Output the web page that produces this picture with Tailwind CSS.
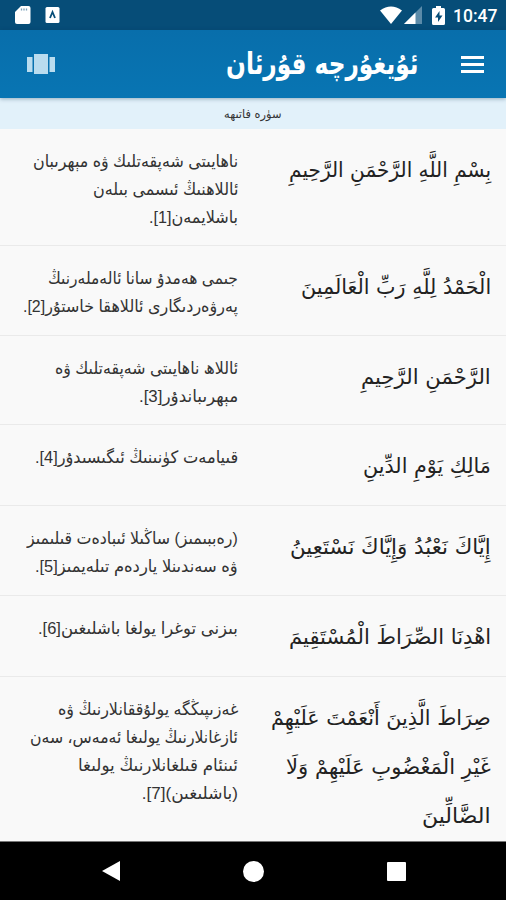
<!DOCTYPE html>
<html lang="ug">
<head>
<meta charset="utf-8">
<title>ئۇيغۇرچە قۇرئان</title>
<script src="https://cdn.jsdelivr.net/npm/@tailwindcss/browser@4"></script>
</head>
<body class="w-[506px] h-[900px] overflow-hidden bg-[#f9f9f9] font-['DejaVu_Sans',sans-serif] text-[#333]">
<div class="flex h-[900px] flex-col">
  <div class="flex h-[30px] shrink-0 items-center justify-between bg-[#064d78] pl-[14px] pr-[9px]">
    <div class="flex items-center gap-[13px]">
      <svg class="h-[20px] w-[18px]" viewBox="0 0 18 20"><path fill="#fff" d="M7 1h7.500q2 0 2 2v14q0 2-2 2H3q-2 0-2-2V7z"/><path stroke="#7b9fb8" stroke-width="1.300" d="M7.500 3.500v2M10 3.500v2M12.500 3.500v2"/></svg>
      <svg class="h-[16px] w-[15px]" viewBox="0 0 15 16"><rect width="14" height="16" x=".5" rx="1.500" fill="#fff"/><path d="M5 11 7.500 5l2.500 6" fill="none" stroke="#064d78" stroke-width="1.800"/></svg>
    </div>
    <div class="flex items-center" dir="ltr">
      <svg class="h-[18px] w-[22px]" viewBox="0 0 22 18"><path fill="#fff" d="M0 4.500Q11-3.500 22 4.500L11 18z"/></svg>
      <svg class="ml-[2px] h-[18px] w-[18px]" viewBox="0 0 18 18"><path fill="#5b8ba9" d="M18 0v18H0z"/><path fill="#fff" d="M11.500 6.500V18H0z"/></svg>
      <svg class="ml-[10px] h-[19px] w-[13px]" viewBox="0 0 13 19"><path fill="#fff" d="M4 0h5v2h2.500q1.500 0 1.500 1.500v14q0 1.500-1.500 1.500h-10Q0 19 0 17.500v-14Q0 2 1.500 2H4z"/><path fill="#064d78" d="M7.500 5 3 11.500h3V16l4.500-6.500h-3z"/></svg>
      <span class="ml-[8px] mt-[2px] w-[44px] whitespace-nowrap font-[Roboto,sans-serif] text-[17.500px] font-medium leading-5 text-white">10:47</span>
    </div>
  </div>
  <header class="z-10 flex h-[68px] shrink-0 items-center justify-between bg-linear-to-b from-[#086eab] to-[#0875b3] pl-[27px] pr-[22px] shadow-[0_1px_4px_rgba(0,50,80,0.35)]">
    <svg class="h-[22px] w-[28px]" viewBox="0 0 28 22"><path fill="#b9dcef" d="M0 4h5.500v15H0zM7 1h14v20H7zM22.500 4H28v15h-5.500z"/></svg>
    <div class="flex items-center gap-[43px]">
      <h1 class="w-[192px] text-[30px] font-bold leading-[40px] text-white" dir="rtl"><span class="block w-max origin-right whitespace-nowrap" data-w="192">ئۇيغۇرچە قۇرئان</span></h1>
      <svg class="mt-[1px] h-[17px] w-[23px]" viewBox="0 0 23 17"><path fill="#fff" d="M0 0h23v3H0zM0 7h23v3H0zM0 14h23v3H0z"/></svg>
    </div>
  </header>
  <div class="flex h-[31px] shrink-0 justify-center bg-[#e2f1fa] pt-[6px] text-[12px] leading-[20px]" dir="rtl"><div class="w-[57px]"><span class="block w-max origin-right whitespace-nowrap" data-w="57">سۈرە فاتىھە</span></div></div>
  <main id="verses" class="min-h-0 flex-1 overflow-hidden" dir="rtl"></main>
  <nav class="flex h-[59px] shrink-0 items-center justify-between border-t border-[#777] bg-black pl-[102px] pr-[100px]">
    <svg class="h-[20px] w-[18px]" viewBox="0 0 18 20"><path fill="#fff" d="M18 0v20L0 10z"/></svg>
    <div class="size-[21px] rounded-full bg-white"></div>
    <div class="size-[19px] rounded-[1px] bg-white"></div>
  </nav>
</div>
<script>
const verses = [
  [117, [['بِسْمِ اللَّهِ الرَّحْمَنِ الرَّحِيمِ',202]], [['ناھايىتى شەپقەتلىك ۋە مېھرىبان',205],['ئاللاھنىڭ ئىسمى بىلەن',145],['باشلايمەن[1].',89]]],
  [90, [['الْحَمْدُ لِلَّهِ رَبِّ الْعَالَمِينَ',190]], [['جىمى ھەمدۇ سانا ئالەملەرنىڭ',190],['پەرۋەردىگارى ئاللاھقا خاستۇر[2].',215]]],
  [89, [['الرَّحْمَنِ الرَّحِيمِ',130]], [['ئاللاھ ناھايىتى شەپقەتلىك ۋە',183],['مېھرىباندۇر[3].',99]]],
  [81, [['مَالِكِ يَوْمِ الدِّينِ',128]], [['قىيامەت كۈنىنىڭ ئىگىسىدۇر[4].',203]]],
  [90, [['إِيَّاكَ نَعْبُدُ وَإِيَّاكَ نَسْتَعِينُ',201]], [['(رەببىمىز) ساڭىلا ئىبادەت قىلىمىز',211],['ۋە سەندىنلا ياردەم تىلەيمىز[5].',203]]],
  [81, [['اهْدِنَا الصِّرَاطَ الْمُسْتَقِيمَ',202]], [['بىزنى توغرا يولغا باشلىغىن[6].',200]]],
  [170, [['صِرَاطَ الَّذِينَ أَنْعَمْتَ عَلَيْهِمْ',220],['غَيْرِ الْمَغْضُوبِ عَلَيْهِمْ وَلَا',205],['الضَّالِّينَ',69]], [['غەزىپىڭگە يولۇققانلارنىڭ ۋە',180],['ئازغانلارنىڭ يولىغا ئەمەس، سەن',208],['ئىنئام قىلغانلارنىڭ يولىغا',160],['(باشلىغىن)[7].',96]]]
];
const lines = list => list.map(([t, w]) => `<span class="block w-max origin-right whitespace-nowrap" data-w="${w}">${t}</span>`).join('');
document.getElementById('verses').innerHTML = verses.map(([h, ar, ug]) => `
  <section class="flex border-b border-[#eaeaea] pr-[15px]" style="height:${h}px">
    <div class="w-[253px] shrink-0 pt-[17px] text-[21px] leading-[49px] text-[#222]">${lines(ar)}</div>
    <div class="w-[220px] shrink-0 pt-[19px] font-['Liberation_Sans','DejaVu_Sans',sans-serif] text-[17px] leading-[28px]">${lines(ug)}</div>
  </section>`).join('');
const fit = () => document.querySelectorAll('[data-w]').forEach(e => {
  e.style.transform = `scaleX(${e.dataset.w / e.offsetWidth})`;
});
fit();
addEventListener('load', () => { fit(); requestAnimationFrame(fit); setTimeout(fit, 50); });
document.fonts.ready.then(fit);
</script>
</body>
</html>
